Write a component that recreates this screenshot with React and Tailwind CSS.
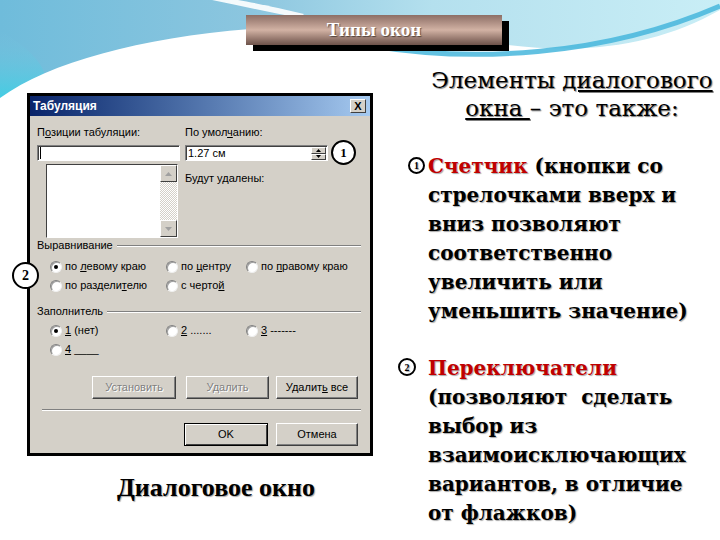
import React from "react";

const Wave = () => (
  <svg width="720" height="110" className="absolute left-0 top-0" viewBox="0 0 720 110">
    <defs>
      <linearGradient id="sky" x1="0" y1="0" x2="1" y2="0">
        <stop offset="0" stopColor="#6fbcdb" />
        <stop offset="0.35" stopColor="#8cc6df" />
        <stop offset="0.6" stopColor="#b4e0ee" />
        <stop offset="1" stopColor="#c9eef6" />
      </linearGradient>
      <linearGradient id="glow" x1="0" y1="0" x2="0" y2="1">
        <stop offset="0" stopColor="#7fc4de" stopOpacity="0" />
        <stop offset="1" stopColor="#2fd2e6" />
      </linearGradient>
    </defs>
    <rect width="720" height="110" fill="url(#sky)" />
    <path d="M0 30 C 30 50 60 70 40 110 L0 110 Z" fill="url(#glow)" />
    <path d="M0 98 C 50 62 140 38 250 29 C 350 22 430 34 500 44 C 590 56 660 44 720 10 L720 110 L0 110 Z" fill="#ffffff" />
    <path d="M372 46 C 470 62 600 58 720 6" stroke="#46b6dc" strokeWidth="5" fill="none" opacity="0.85" />
    <path d="M212 0 C 240 6 270 12 300 18 L 304 14 C 280 8 255 3 238 0 Z" fill="#ffffff" opacity="0.9" />
  </svg>
);

const Radio = ({ checked }) => (
  <span className="relative inline-block w-[12px] h-[12px] shrink-0 rounded-full bg-white border border-t-[#808080] border-l-[#808080] border-b-[#f0f0f0] border-r-[#f0f0f0] shadow-[inset_1px_1px_0_#a0a0a0]">
    {checked && <span className="absolute left-[3px] top-[3px] w-[4px] h-[4px] rounded-full bg-black" />}
  </span>
);

const Opt = ({ checked, w, children }) => (
  <div className={`flex items-center gap-[3px] ${w}`}>
    <Radio checked={checked} />
    <span>{children}</span>
  </div>
);

const Btn = ({ w, disabled, def, children }) => (
  <div
    className={`${w} h-[23px] flex items-center justify-center bg-[#d4d0c8] border ${
      def ? "border-black" : "border-t-white border-l-white border-b-[#404040] border-r-[#404040]"
    } ${
      def
        ? "shadow-[inset_1px_1px_0_#fff,inset_-1px_-1px_0_#404040]"
        : "shadow-[inset_-1px_-1px_0_#808080]"
    } ${disabled ? "text-[#808080] [text-shadow:1px_1px_0_#fff]" : "text-black"}`}
  >
    <span>{children}</span>
  </div>
);

const Sunken = ({ className, children }) => (
  <div className={`bg-white border border-t-[#808080] border-l-[#808080] border-b-white border-r-white shadow-[inset_1px_1px_0_#404040] ${className}`}>
    {children}
  </div>
);

const ScrollBtn = ({ up }) => (
  <div className="w-[17px] h-[17px] flex items-center justify-center bg-[#d4d0c8] border border-t-white border-l-white border-b-[#404040] border-r-[#404040]">
    <svg width="7" height="4" viewBox="0 0 7 4">
      {up ? <path d="M3.5 0 L7 4 L0 4 Z" fill="#a0a0a0" /> : <path d="M0 0 L7 0 L3.5 4 Z" fill="#a0a0a0" />}
    </svg>
  </div>
);

const Group = ({ title }) => (
  <div className="flex items-center h-[13px] pr-[9px]">
    <span className="pr-[4px]">{title}</span>
    <div className="flex-1 border-t border-t-[#808080] border-b border-b-white" />
  </div>
);

const Callout = ({ n, className }) => (
  <div className={`absolute rounded-full bg-white border-2 border-black flex items-center justify-center font-bold text-black ${className}`}>
    {n}
  </div>
);

const Dialog = () => (
  <div className="relative w-[346px] h-[363px] border-[3px] border-black bg-[#d4d0c8] text-[11px] leading-[13px] text-black font-['Liberation_Sans',Arial,sans-serif]">
    <div className="h-[20px] flex items-center justify-between pl-[3px] pr-[4px] bg-gradient-to-r from-[#0a246a] to-[#a6caf0]">
      <span className="text-white font-bold text-[12px]">Табуляция</span>
      <div className="w-[16px] h-[14px] flex items-center justify-center bg-[#d4d0c8] border border-t-white border-l-white border-b-[#404040] border-r-[#404040] text-[11px] font-bold leading-none">
        X
      </div>
    </div>
    <div className="pl-[7px]">
      <div className="flex gap-[5px] pt-[10px]">
        <div className="w-[143px]">
          <div>
            П<u>о</u>зиции табуляции:
          </div>
          <Sunken className="mt-[6px] h-[16px] flex items-center pl-[2px]">
            <span className="w-px h-[12px] bg-black" />
          </Sunken>
          <div className="mt-[3px] ml-[9px] flex w-[132px] h-[74px] border border-t-[#404040] border-l-[#404040] border-b-white border-r-white">
            <div className="flex-1 bg-white" />
            <div className="w-[17px] flex flex-col">
              <ScrollBtn up />
              <div className="flex-1 bg-[repeating-conic-gradient(#d4d0c8_0%_25%,#ffffff_0%_50%)] bg-[length:2px_2px]" />
              <ScrollBtn />
            </div>
          </div>
        </div>
        <div className="w-[143px]">
          <div>
            По умол<u>ч</u>анию:
          </div>
          <Sunken className="mt-[6px] h-[16px] flex items-center justify-between pl-[2px] pr-px">
            <span>1.27 см</span>
            <div className="flex flex-col w-[15px] h-[13px]">
              <div className="h-[7px] flex items-center justify-center bg-[#d4d0c8] border border-t-white border-l-white border-b-[#404040] border-r-[#404040]">
                <svg width="5" height="3" viewBox="0 0 5 3"><path d="M2.5 0 L5 3 L0 3 Z" fill="#000" /></svg>
              </div>
              <div className="h-[6px] flex items-center justify-center bg-[#d4d0c8] border border-t-white border-l-white border-b-[#404040] border-r-[#404040]">
                <svg width="5" height="3" viewBox="0 0 5 3"><path d="M0 0 L5 0 L2.5 3 Z" fill="#000" /></svg>
              </div>
            </div>
          </Sunken>
          <div className="mt-[11px]">Будут удалены:</div>
        </div>
      </div>

      <div className="mt-px">
        <Group title="Выравнивание" />
      </div>
      <div className="mt-[5px] pl-[13px]">
        <div className="flex h-[19px] items-center">
          <Opt checked w="w-[116px]">по <u>л</u>евому краю</Opt>
          <Opt w="w-[80px]">по <u>ц</u>ентру</Opt>
          <Opt>по <u>п</u>равому краю</Opt>
        </div>
        <div className="flex h-[19px] items-center">
          <Opt w="w-[116px]">по раздели<u>т</u>елю</Opt>
          <Opt>с черто<u>й</u></Opt>
        </div>
      </div>

      <div className="mt-[10px]">
        <Group title="Заполнитель" />
      </div>
      <div className="mt-[3px] pl-[13px]">
        <div className="flex h-[19px] items-center">
          <Opt checked w="w-[116px]"><u>1</u> (нет)</Opt>
          <Opt w="w-[80px]"><u>2</u> .......</Opt>
          <Opt><u>3</u> -------</Opt>
        </div>
        <div className="flex h-[19px] items-center">
          <Opt><u>4</u> ____</Opt>
        </div>
      </div>

      <div className="mt-[17px] flex pl-[55px] gap-[10px]">
        <Btn w="w-[84px]" disabled>Установить</Btn>
        <Btn w="w-[83px]" disabled>Удалить</Btn>
        <div className="-ml-[3px]">
          <Btn w="w-[82px]">Удалит<u>ь</u> все</Btn>
        </div>
      </div>
      <div className="mt-[10px] ml-[5px] mr-[9px] border-t border-t-[#808080] border-b border-b-white" />
      <div className="mt-[12px] flex pl-[147px] gap-[8px]">
        <Btn w="w-[84px]" def>OK</Btn>
        <Btn w="w-[82px]">Отмена</Btn>
      </div>
    </div>
  </div>
);

const shadow = "[text-shadow:1px_1px_1px_rgba(0,0,0,0.35)]";

export default function App() {
  return (
    <div className="relative w-[720px] h-[540px] overflow-hidden bg-white">
      <Wave />
      <div className="relative">
        <div className="pt-[15px] pl-[246px]">
          <div className="w-[256px] h-[30px] flex items-center justify-center bg-gradient-to-b from-[#8d6f66] via-[#d2b2a4] to-[#6e534b] shadow-[7px_6px_0_#000] text-white font-bold text-[19px] font-['Liberation_Serif',serif] [text-shadow:1px_1px_1px_rgba(0,0,0,0.5)]">
            Типы окон
          </div>
        </div>

        <div className="flex">
          <div className="w-[398px] pl-[27px] pt-[48px]">
            <Dialog />
            <div className={`mt-[17px] w-[346px] pl-[32px] text-center text-[26px] leading-[30px] font-bold font-['Liberation_Serif',serif] text-black ${shadow}`}>
              Диалоговое окно
            </div>
          </div>

          <div className="flex-1 pt-[21px] font-['DejaVu_Serif',serif] text-black">
            <div className={`ml-[29px] w-[290px] text-center text-[23px] leading-[28px] [text-shadow:1px_1px_1px_rgba(0,0,0,0.5)]`}>
              Элементы <u>диалогового</u>
              <br />
              <u>окна </u>– это также:
            </div>

            <div className={`relative mt-[30px] pl-[30px] text-[20px] leading-[29px] font-bold ${shadow}`}>
              <Callout n="1" className="left-[10px] top-[5px] w-[17px] h-[17px] text-[10px] font-['Liberation_Serif',serif]" />
              <span className="text-[#c00000]">Счетчик</span> (кнопки со
              <br />
              стрелочками вверх и
              <br />
              вниз позволяют
              <br />
              соответственно
              <br />
              увеличить или
              <br />
              уменьшить значение)
            </div>

            <div className={`relative mt-[28px] pl-[30px] text-[20px] leading-[29px] font-bold ${shadow}`}>
              <Callout n="2" className="left-0 top-[4px] w-[18px] h-[18px] text-[10px] font-['Liberation_Serif',serif]" />
              <span className="text-[#c00000]">Переключатели</span>
              <br />
              (позволяют &nbsp;сделать
              <br />
              выбор из
              <br />
              взаимоисключающих
              <br />
              вариантов, в отличие
              <br />
              от флажков)
            </div>
          </div>
        </div>
      </div>

      <Callout n="1" className="left-[331px] top-[140px] w-[25px] h-[25px] text-[13px] font-['Liberation_Serif',serif]" />
      <Callout n="2" className="left-[12px] top-[262px] w-[27px] h-[27px] text-[14px] font-['Liberation_Serif',serif]" />
    </div>
  );
}
